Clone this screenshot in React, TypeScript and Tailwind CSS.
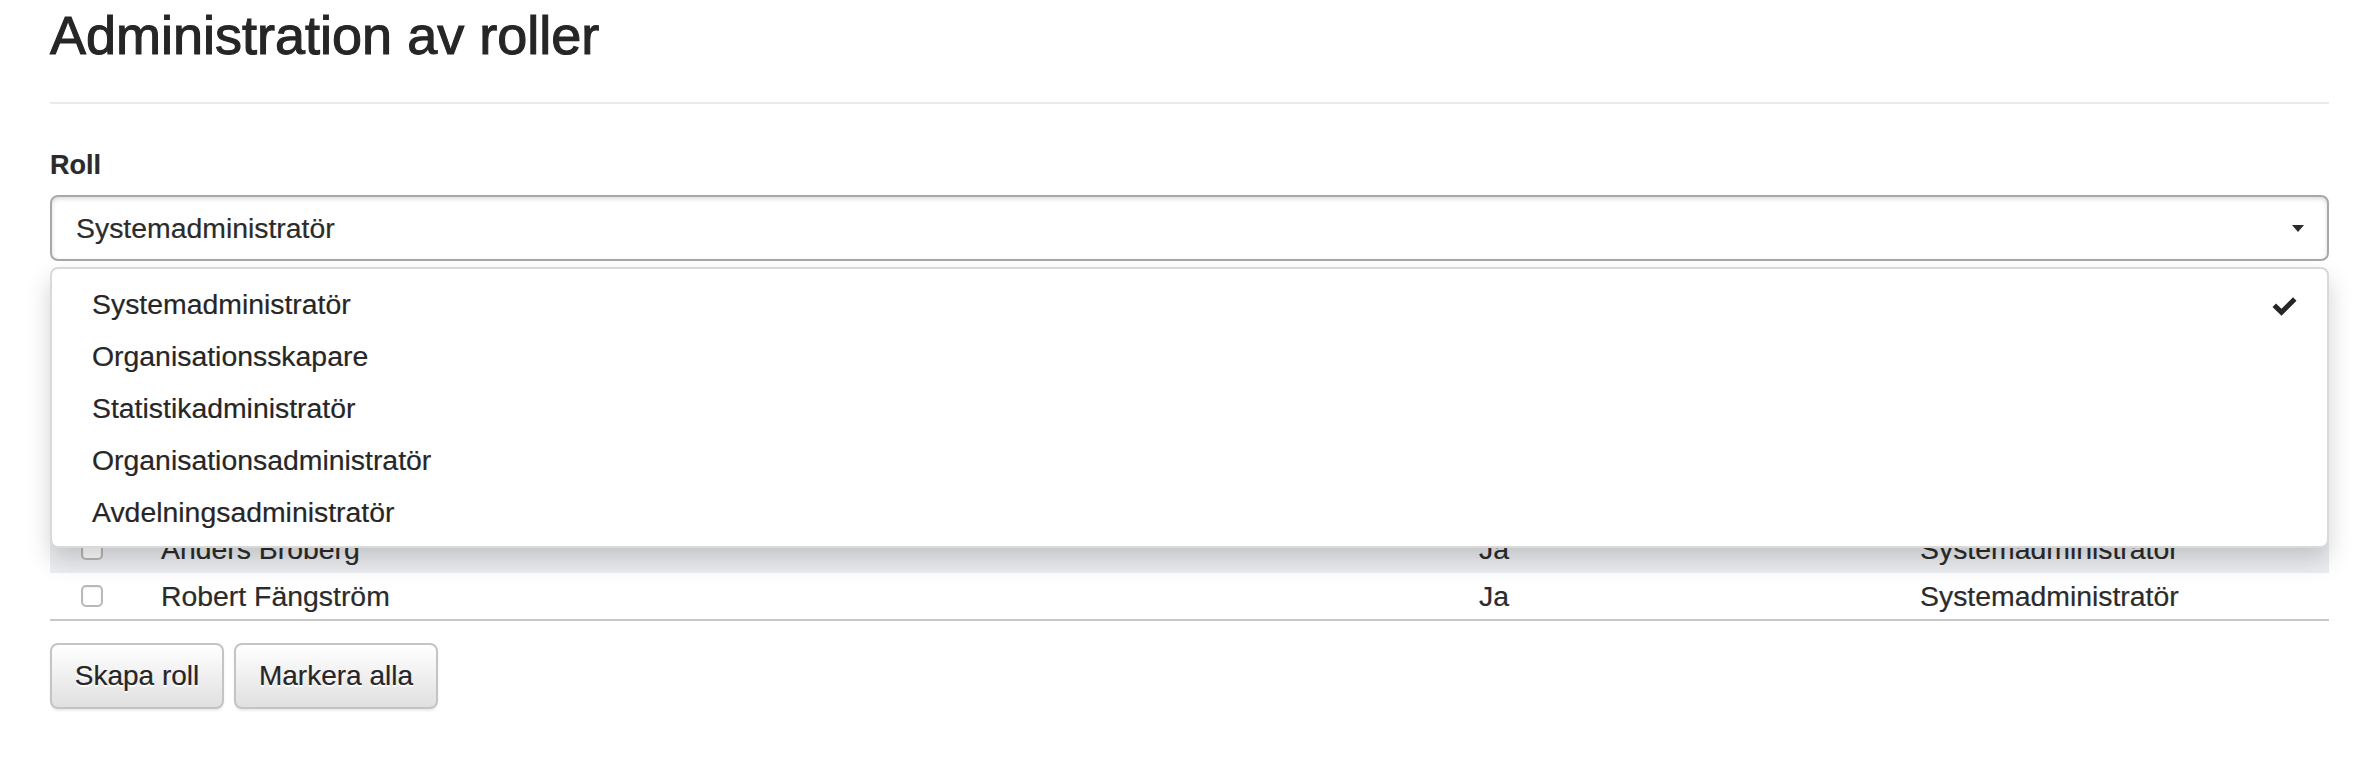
import React from "react";

const roles = [
  "Systemadministratör",
  "Organisationsskapare",
  "Statistikadministratör",
  "Organisationsadministratör",
  "Avdelningsadministratör",
];

function Checkbox() {
  return (
    <span className="block w-[22px] h-[22px] rounded-[5px] border-2 border-[#b8b8b8] bg-white shadow-[inset_0_1px_2px_rgba(0,0,0,0.08)]" />
  );
}

function Row({
  name,
  active,
  role,
  rowClass,
}: {
  name: string;
  active: string;
  role: string;
  rowClass: string;
}) {
  return (
    <div className={rowClass}>
      <div className="pl-[31px]">
        <Checkbox />
      </div>
      <div>{name}</div>
      <div>{active}</div>
      <div>{role}</div>
    </div>
  );
}

export default function App() {
  return (
    <div className="min-h-[780px] bg-white text-[#2b2b2b] font-['Liberation_Sans',Arial,sans-serif] [-webkit-text-stroke:0.2px_#2b2b2b]">
      <div className="ml-[50px] w-[2279px]">
        <h1 className="pt-[6px] text-[54px] leading-[59px] font-normal text-[#262626] [-webkit-text-stroke:1.1px_#262626]">
          Administration av roller
        </h1>
        <hr className="mt-[37px] border-0 border-t-2 border-[#eaeaea]" />

        {/* Roll select */}
        <div className="relative mt-[41px]">
          <label className="block text-[27px] leading-[40px] font-bold">Roll</label>
          <div className="mt-[10px] flex items-center justify-between h-[66px] rounded-[8px] border-2 border-[#a8a8a8] bg-white pl-[24px] pr-[23px] text-[28.4px] shadow-[inset_0_2px_4px_rgba(0,0,0,0.14)]">
            <span>Systemadministratör</span>
            <svg width="12" height="7" viewBox="0 0 12 7" className="mt-[1px]">
              <path d="M0 0 H12 L6 7 Z" fill="#2b2b2b" />
            </svg>
          </div>

          {/* content covered by the open menu */}
          <div className="mt-[10px] h-[40px]" />
          <div className="mt-[10px] h-[66px] rounded-[8px] border-2 border-[#a8a8a8] bg-white shadow-[inset_0_2px_4px_rgba(0,0,0,0.14)]" />

          <div className="mt-[40px]">
            <div className="h-[50px] border-b-2 border-[#cfcfcf]" />
            <div className="h-[48px]" />
            <Row
              name="Anders Broberg"
              active="Ja"
              role="Systemadministratör"
              rowClass="grid grid-cols-[111px_1318px_441px_1fr] items-center h-[48px] text-[28.4px] leading-[40px] bg-[#eceef1]"
            />
            <Row
              name="Robert Fängström"
              active="Ja"
              role="Systemadministratör"
              rowClass="grid grid-cols-[111px_1318px_441px_1fr] items-center h-[48px] text-[28.4px] leading-[40px] border-b-2 border-[#c8c8c8]"
            />
          </div>

          {/* open dropdown menu */}
          <div className="absolute left-0 right-0 top-[122px] z-10 rounded-[8px] border-2 border-[rgba(0,0,0,0.15)] bg-white pt-[9px] pb-[8px] shadow-[0_12px_24px_rgba(0,0,0,0.175)]">
            {roles.map((r, i) => (
              <div
                key={r}
                className="flex items-center justify-between h-[52px] pl-[40px] pr-[30px] text-[28.4px] leading-[52px] text-[#262626]"
              >
                <span>{r}</span>
                {i === 0 && (
                  <svg width="25" height="19" viewBox="0 0 25 19" className="mt-[5px]">
                    <path d="M0.5 10 L4 6.5 L9.5 11.8 L21 0.3 L24.5 3.8 L9.5 18.7 Z" fill="#262626" />
                  </svg>
                )}
              </div>
            ))}
          </div>
        </div>

        {/* Buttons */}
        <div className="mt-[22px] flex gap-[10px]">
          <button className="w-[174px] h-[66px] rounded-[8px] border-2 border-[#c4c4c4] bg-linear-to-b from-white to-[#e0e0e0] text-[28px] text-[#262626] shadow-[0_2px_2px_rgba(0,0,0,0.075)] [text-shadow:0_2px_0_#fff]">
            Skapa roll
          </button>
          <button className="w-[204px] h-[66px] rounded-[8px] border-2 border-[#c4c4c4] bg-linear-to-b from-white to-[#e0e0e0] text-[28px] text-[#262626] shadow-[0_2px_2px_rgba(0,0,0,0.075)] [text-shadow:0_2px_0_#fff]">
            Markera alla
          </button>
        </div>
      </div>
    </div>
  );
}
